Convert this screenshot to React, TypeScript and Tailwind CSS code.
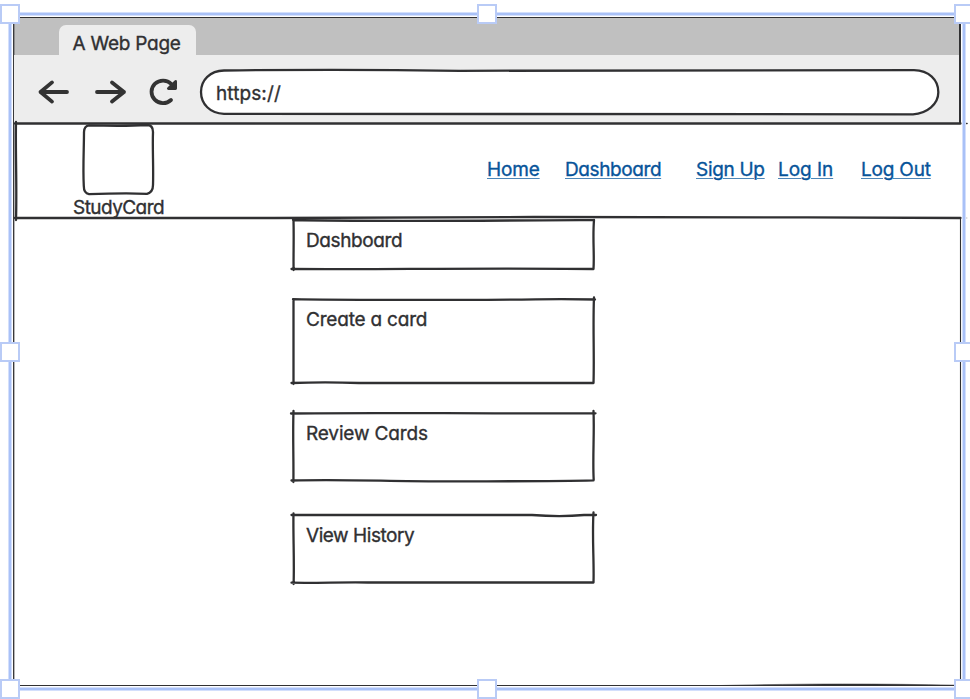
import React from 'react';

const LABEL =
  "block whitespace-nowrap font-['Inter','Open_Sans',sans-serif] text-[19px] leading-6 font-normal [font-feature-settings:'cv11'] [-webkit-text-stroke:0.35px_currentColor]";

function Label({ className, children }: { className: string; children: React.ReactNode }) {
  return <span className={`${LABEL} ${className}`}>{children}</span>;
}

function Sketch({ children }: { children: React.ReactNode }) {
  return (
    <svg
      className="pointer-events-none absolute top-0 left-0 overflow-visible"
      width="1"
      height="1"
      fill="none"
      stroke="#303032"
      strokeWidth="2.3"
      strokeLinecap="round"
      strokeLinejoin="round"
    >
      {children}
    </svg>
  );
}

function Toolbar() {
  return (
    <div className="relative z-10 flex h-[68px] items-start bg-[#ededed] pt-[15px]">
      <svg
        className="mt-1 ml-[22px] h-9 w-[150px]"
        viewBox="36 74 150 36"
        fill="none"
        stroke="#333"
        strokeWidth="3.8"
        strokeLinecap="round"
        strokeLinejoin="round"
      >
        <path d="M67 92H40.5M52 82.4 40.5 92l11.5 9.6" />
        <path d="M97 92h27M112 82.4 124 92l-12 9.6" />
        <path d="M171 100A11.5 11.3 0 1 1 171.3 84" />
        <path d="M175.6 81.5 168.4 88.5H175.6Z" fill="#333" strokeWidth="2.8" />
      </svg>
      <div className="relative ml-[14px] flex h-[44px] w-[738px] items-start rounded-full bg-white pt-[12px] pl-4">
        <Label className="tracking-[0.1px] text-[#303032]">https://</Label>
        <Sketch>
          <path d="M24 .5C100 -.5 190 -.3 260 .8S480 0 714 .1C729 .4 738.3 10 738.3 22C738.6 34 727 43.5 713 44.3C560 43 400 44.4 24 43.8C10 43.3 1 34 1 22C1 10 10 .8 24 .5Z" />
        </Sketch>
      </div>
      <Sketch>
        <path d="M1 68.5H946.5" />
        <path d="M946 -37V68" strokeWidth="2" />
      </Sketch>
    </div>
  );
}

function NavLink({ className, children }: { className: string; children: React.ReactNode }) {
  return (
    <a
      className={`${LABEL} text-[#07549a] underline decoration-[#4c86b8] decoration-1 underline-offset-[2px] ${className}`}
    >
      {children}
    </a>
  );
}

function NavBar() {
  return (
    <div className="relative z-20 flex h-[94px] items-start">
      <div className="ml-[59px] flex w-[100px] flex-col">
        <div className="relative ml-[10px] h-[70px] w-[70px]">
          <Sketch>
            <path d="M6 2.3C28 3 48 3 64 2C68 2 70 5 70 9C69.4 25 70.6 46 70 62C70 67 67 70 64 70.8C48 70.2 25 70.5 6 71.2C2 70.5 .8 67 .8 63C-.2 45 1 25 1 9C1.2 5 3 2.5 6 2.3Z" />
          </Sketch>
        </div>
        <Label className="mt-[3px] tracking-[-0.55px] text-[#303032]">StudyCard</Label>
      </div>
      <div className="mt-[35px] ml-[314px] flex">
        <NavLink className="w-[78px] tracking-[-0.15px]">Home</NavLink>
        <NavLink className="w-[131px] tracking-[-0.4px]">Dashboard</NavLink>
        <NavLink className="w-[82px] tracking-[-0.3px]">Sign Up</NavLink>
        <NavLink className="w-[83px] tracking-[-0.05px]">Log In</NavLink>
        <NavLink className="tracking-[-0.2px]">Log Out</NavLink>
      </div>
      <Sketch>
        <path d="M2 -1C1.4 30 3 64 2 97" strokeWidth="2.3" />
        <path d="M1 95H260C380 94.8 460 93.8 520 94S800 94.2 946.5 95" />
      </Sketch>
    </div>
  );
}

function Card({
  className,
  label,
  tracking,
  outline,
}: {
  className: string;
  label: string;
  tracking: string;
  outline: string;
}) {
  return (
    <div className={`relative w-[301px] pl-[13px] ${className}`}>
      <Label className={`text-[#303032] ${tracking}`}>{label}</Label>
      <Sketch>
        <path d={outline} />
      </Sketch>
    </div>
  );
}

const HANDLE = 'absolute size-[20px] border-2 border-[#b9cbf6] bg-white';

function Selection() {
  return (
    <div className="pointer-events-none absolute inset-0 z-30">
      <div className="absolute top-[12px] left-[8px] h-[4px] w-[958px] border-y border-[#d3dffc] bg-[#a9c1f7]" />
      <div className="absolute top-[687px] left-[8px] h-[4px] w-[958px] border-y border-[#d3dffc] bg-[#a9c1f7]" />
      <div className="absolute top-[14px] left-[8px] h-[675px] w-[4px] border-x border-[#d3dffc] bg-[#a9c1f7]" />
      <div className="absolute top-[14px] left-[962px] h-[675px] w-[4px] border-x border-[#d3dffc] bg-[#a9c1f7]" />
      <div className={`${HANDLE} top-[4px] left-0`} />
      <div className={`${HANDLE} top-[4px] left-[477px]`} />
      <div className={`${HANDLE} top-[4px] left-[954px]`} />
      <div className={`${HANDLE} top-[342px] left-0`} />
      <div className={`${HANDLE} top-[342px] left-[954px]`} />
      <div className={`${HANDLE} top-[679px] left-0`} />
      <div className={`${HANDLE} top-[679px] left-[477px]`} />
      <div className={`${HANDLE} top-[679px] left-[954px]`} />
    </div>
  );
}

export default function App() {
  return (
    <div className="relative h-[699px] w-[970px] overflow-hidden bg-white pt-[17px] pl-[14px]">
      <div className="relative h-[669px] w-[947px]">
        <div className="flex h-[38px] items-end bg-[#c0c0c0] pl-[45px]">
          <div className="h-[30px] w-[137px] rounded-t-[7px] bg-[#ededed] pt-[7px] pl-[13.5px]">
            <Label className="tracking-[-0.25px] text-[#303032]">A Web Page</Label>
          </div>
        </div>
        <Toolbar />
        <NavBar />
        <div className="flex flex-col pl-[279px]">
          <Card
            className="mt-[3px] h-[49px] pt-[9px]"
            label="Dashboard"
            tracking="tracking-[-0.4px]"
            outline="M0 0C70 1.6 150 1 301 0M.5 0C1 20 .3 36 .6 50M-1.5 49C80 49.6 190 47.8 300.5 49M301 0C299.5 18 301.5 34 300.5 49"
          />
          <Card
            className="mt-[30px] h-[84px] pt-[9px]"
            label="Create a card"
            tracking="tracking-[-0.2px]"
            outline="M0 .2C60 1.5 130 .7 190 .8S250 -.8 302 .5M.5 .5V85M-1.5 84C30 83 50 83.5 66 84H300.5M301-1.5C299.8 25 301.4 58 300.5 84"
          />
          <Card
            className="mt-[30px] h-[67px] pt-[9px]"
            label="Review Cards"
            tracking="tracking-[-0.15px]"
            outline="M-2 .5C60 -.7 170 .6 302.5 .3M.5-2C-.3 20 .7 45 .4 69M-1.5 67.5C50 66 95 68.4 150 68.3S260 68.6 300.5 67.4M300.5-2C301.5 20 299.5 45 300.7 67"
          />
          <Card
            className="mt-[35px] h-[67px] pt-[9px]"
            label="View History"
            tracking="tracking-[-0.45px]"
            outline="M-1.5 0H239C255 1.2 280 1 291 0H303M.5-1.5C0 18 1.4 46 .6 69M-1.5 67.7C25 68.2 50 67 75 67.5H300.5M300.5-2.5C299 22 301.2 46 300.5 67.5"
          />
        </div>
        <Sketch>
          <path d="M-.3 .5V668.5" strokeWidth="1.3" strokeLinecap="butt" />
          <path d="M0 .5H947" strokeWidth="1.2" strokeLinecap="butt" />
          <path d="M946.5 201V668" strokeWidth="1.1" strokeLinecap="butt" />
          <path d="M0 668.5H947" strokeWidth="1" strokeLinecap="butt" />
          <path d="M707 668.5C790 666.5 870 666.5 941 668.3Z" fill="#303032" strokeWidth=".5" />
          <path d="M952.5 106.5h.5" strokeWidth="1.6" />
          <path d="M952 201h1" stroke="#bbb" strokeWidth="1" />
        </Sketch>
      </div>
      <Selection />
    </div>
  );
}
